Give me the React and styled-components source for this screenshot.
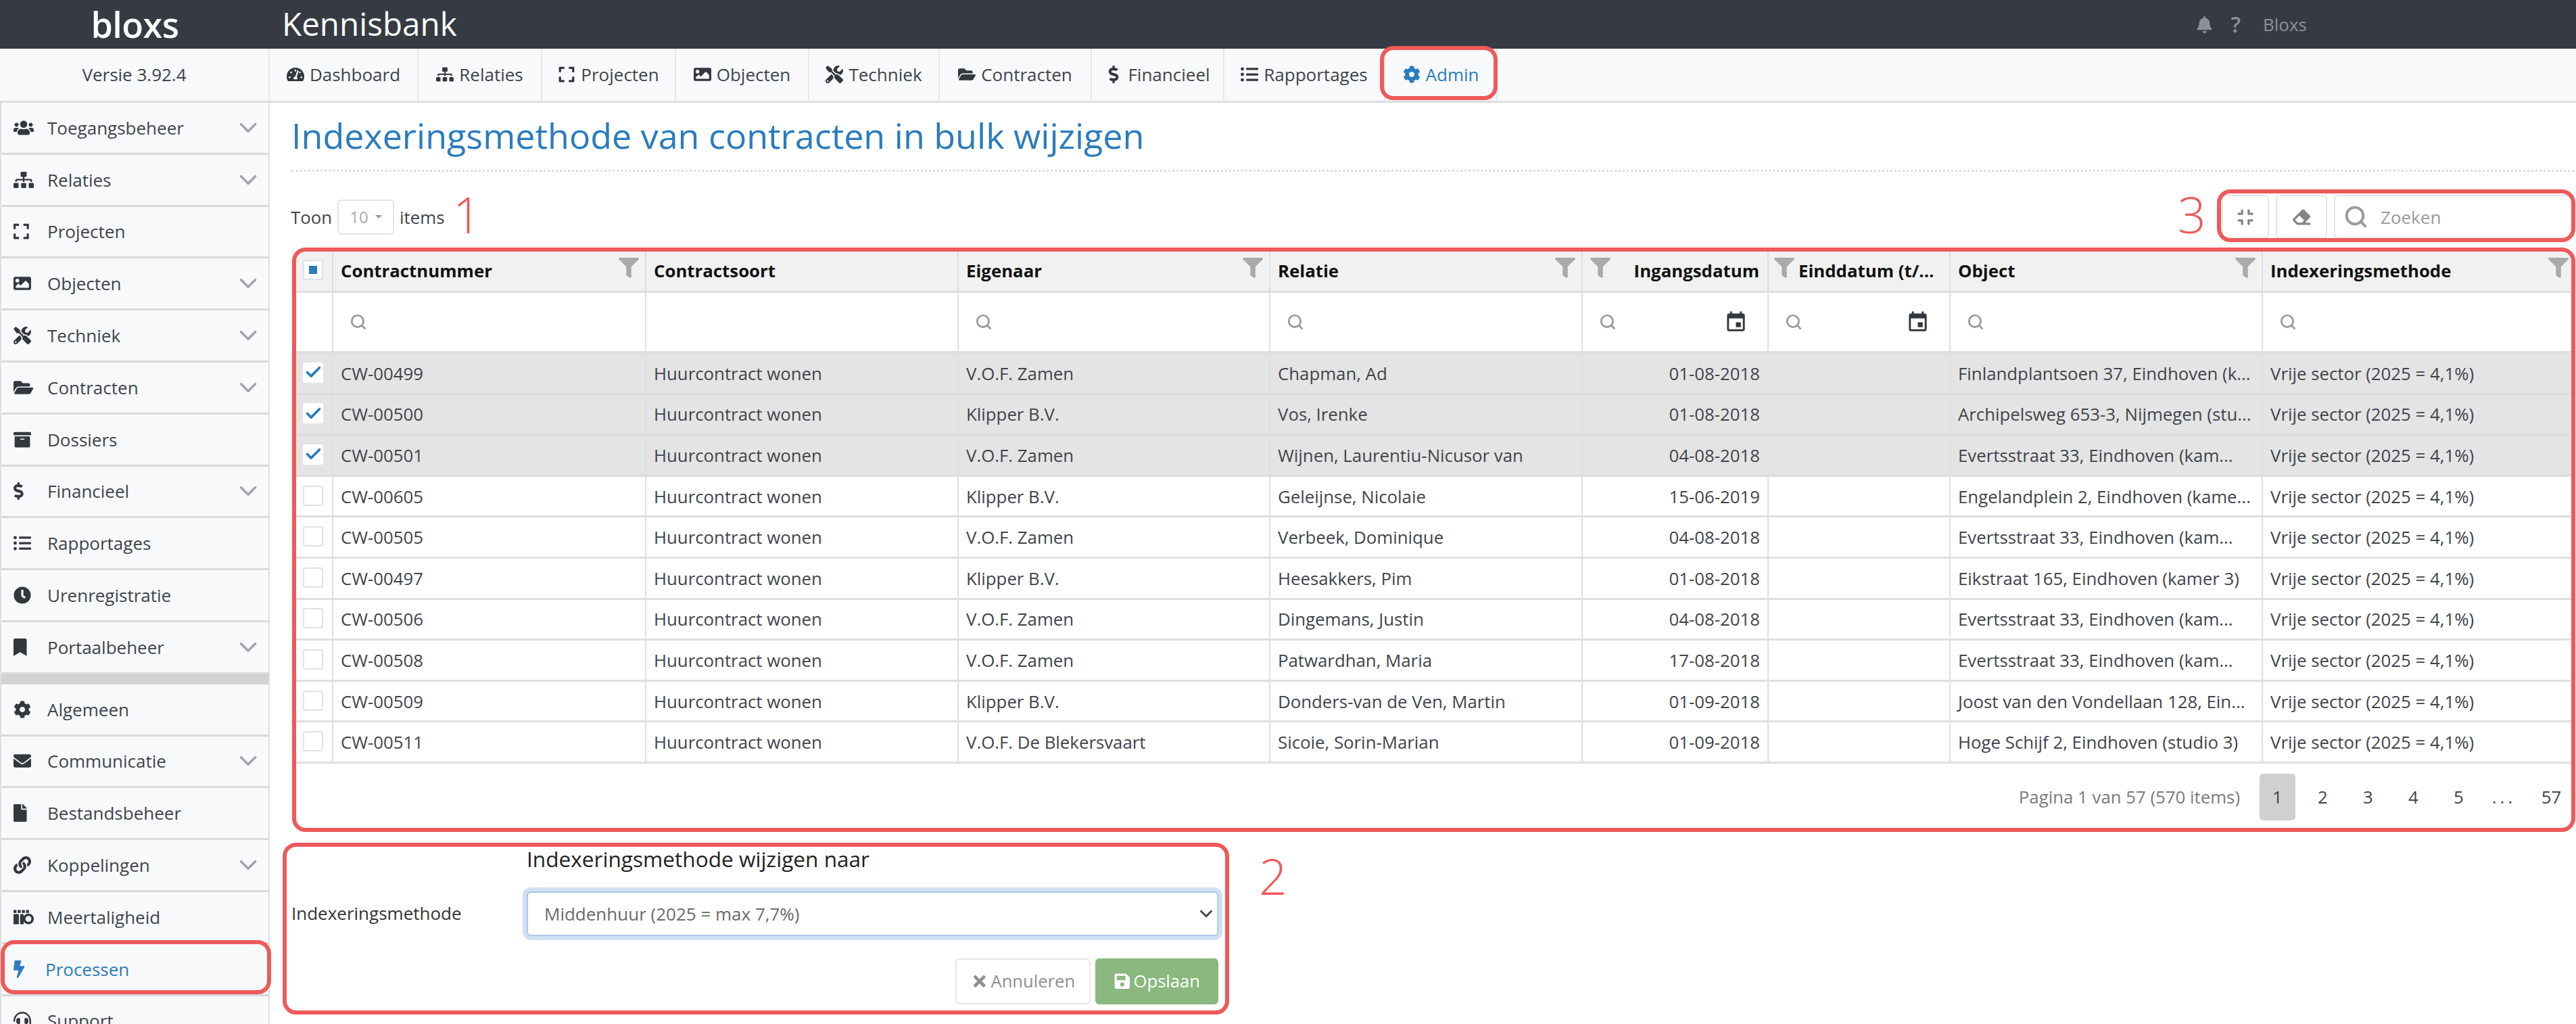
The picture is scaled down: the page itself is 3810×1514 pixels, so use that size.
import React from "react";
import styled, { createGlobalStyle } from "styled-components";
import {
  FaArchive, FaBell, FaBolt, FaBookmark, FaClock, FaCog, FaCompress, FaDollarSign,
  FaEnvelope, FaEraser, FaExpand, FaFile, FaFilter, FaFolderOpen, FaHeadset, FaImage,
  FaLink, FaListUl, FaSave, FaSitemap, FaTachometerAlt, FaTimes, FaTools, FaUsers,
} from "react-icons/fa";
import { MdEvent } from "react-icons/md";
import { Check, ChevronDown, Search } from "lucide-react";

const RED = "#ee5a5a";
const BLUE = "#2a7cbd";
const LINE = "#dedfe0";
const COLS = "62px 463px 462px 461px 462px 275px 269px 462px 461px";

// the icon of "Meertaligheid" has no match in the icon packages
const LanguageIcon = (props) => (
  <svg viewBox="0 0 34 26" fill="currentColor" {...props}>
    <rect x="0" y="1" width="5" height="5" />
    <rect x="7" y="1" width="5" height="5" />
    <rect x="14" y="1" width="5" height="5" />
    <rect x="21" y="1" width="5" height="5" />
    <rect x="0" y="8" width="9" height="17" rx="1" />
    <rect x="11" y="8" width="6" height="17" rx="1" />
    <circle cx="25" cy="16" r="7" fill="none" stroke="currentColor" strokeWidth="4" />
  </svg>
);

const navItems = [
  { label: "Dashboard", icon: FaTachometerAlt, w: 220 },
  { label: "Relaties", icon: FaSitemap, w: 183 },
  { label: "Projecten", icon: FaExpand, w: 198 },
  { label: "Objecten", icon: FaImage, w: 197 },
  { label: "Techniek", icon: FaTools, w: 193 },
  { label: "Contracten", icon: FaFolderOpen, w: 225 },
  { label: "Financieel", icon: FaDollarSign, w: 196 },
  { label: "Rapportages", icon: FaListUl, w: 238 },
  { label: "Admin", icon: FaCog, w: 166, active: true },
];

const sideTop = [
  { label: "Toegangsbeheer", icon: FaUsers, more: true },
  { label: "Relaties", icon: FaSitemap, more: true },
  { label: "Projecten", icon: FaExpand },
  { label: "Objecten", icon: FaImage, more: true },
  { label: "Techniek", icon: FaTools, more: true },
  { label: "Contracten", icon: FaFolderOpen, more: true },
  { label: "Dossiers", icon: FaArchive },
  { label: "Financieel", icon: FaDollarSign, more: true },
  { label: "Rapportages", icon: FaListUl },
  { label: "Urenregistratie", icon: FaClock },
  { label: "Portaalbeheer", icon: FaBookmark, more: true },
];

const sideBottom = [
  { label: "Algemeen", icon: FaCog },
  { label: "Communicatie", icon: FaEnvelope, more: true },
  { label: "Bestandsbeheer", icon: FaFile },
  { label: "Koppelingen", icon: FaLink, more: true },
  { label: "Meertaligheid", icon: LanguageIcon },
  { label: "Processen", icon: FaBolt, active: true },
  { label: "Support", icon: FaHeadset },
];

const columns = [
  { label: "Contractnummer", filter: true, search: true },
  { label: "Contractsoort" },
  { label: "Eigenaar", filter: true, search: true },
  { label: "Relatie", filter: true, search: true },
  { label: "Ingangsdatum", filter: true, search: true, date: true },
  { label: "Einddatum (t/...", filter: true, search: true, date: true, tight: true },
  { label: "Object", filter: true, search: true },
  { label: "Indexeringsmethode", filter: true, search: true },
];

const rows = [
  ["CW-00499", "V.O.F. Zamen", "Chapman, Ad", "01-08-2018", "Finlandplantsoen 37, Eindhoven (k...", true],
  ["CW-00500", "Klipper B.V.", "Vos, Irenke", "01-08-2018", "Archipelsweg 653-3, Nijmegen (stu...", true],
  ["CW-00501", "V.O.F. Zamen", "Wijnen, Laurentiu-Nicusor van", "04-08-2018", "Evertsstraat 33, Eindhoven (kam...", true],
  ["CW-00605", "Klipper B.V.", "Geleijnse, Nicolaie", "15-06-2019", "Engelandplein 2, Eindhoven (kame..."],
  ["CW-00505", "V.O.F. Zamen", "Verbeek, Dominique", "04-08-2018", "Evertsstraat 33, Eindhoven (kam..."],
  ["CW-00497", "Klipper B.V.", "Heesakkers, Pim", "01-08-2018", "Eikstraat 165, Eindhoven (kamer 3)"],
  ["CW-00506", "V.O.F. Zamen", "Dingemans, Justin", "04-08-2018", "Evertsstraat 33, Eindhoven (kam..."],
  ["CW-00508", "V.O.F. Zamen", "Patwardhan, Maria", "17-08-2018", "Evertsstraat 33, Eindhoven (kam..."],
  ["CW-00509", "Klipper B.V.", "Donders-van de Ven, Martin", "01-09-2018", "Joost van den Vondellaan 128, Ein..."],
  ["CW-00511", "V.O.F. De Blekersvaart", "Sicoie, Sorin-Marian", "01-09-2018", "Hoge Schijf 2, Eindhoven (studio 3)"],
];

const GlobalStyle = createGlobalStyle`
  html, body {
    margin: 0;
    background: #fff;
    font-family: "Open Sans", "Liberation Sans", sans-serif;
    font-size: 25.8px;
    color: #3f444b;
  }
  * { box-sizing: border-box; }
`;

const Page = styled.div`
  position: relative;
  width: 3810px;
  height: 1514px;
  overflow: hidden;
`;

const TopBar = styled.header`
  display: flex;
  align-items: center;
  height: 72px;
  background: #363a42;
`;

const Logo = styled.div`
  width: 399px;
  text-align: center;
  font-size: 52px;
  font-weight: 600;
  line-height: 1.2;
  letter-spacing: -0.5px;
  color: #fff;
`;

const AppName = styled.div`
  margin-left: 18px;
  font-size: 47.6px;
  line-height: 1.2;
  color: #fff;
  padding-bottom: 2px;
`;

const UserArea = styled.div`
  display: flex;
  align-items: center;
  margin-left: auto;
  margin-right: 398px;
  color: #8d9196;
  font-size: 26px;
  svg { font-size: 25px; margin-right: 26px; }
`;

const HelpMark = styled.span`
  margin-right: 33px;
  font-size: 32px;
  font-weight: 600;
  line-height: 1;
`;

const SubBar = styled.div`
  display: flex;
  height: 80px;
  background: #f8f9fb;
  border-bottom: 3px solid ${LINE};
`;

const Version = styled.div`
  display: flex;
  align-items: center;
  justify-content: center;
  width: 399px;
  padding-bottom: 2px;
  font-size: 26px;
  border-right: 2px solid #e6e7e9;
`;

const NavList = styled.nav`
  display: flex;
`;

const NavItem = styled.a`
  display: flex;
  align-items: center;
  justify-content: center;
  gap: 8px;
  width: ${(p) => p.$w}px;
  padding-bottom: 2px;
  font-size: 26px;
  white-space: nowrap;
  color: ${(p) => (p.$active ? BLUE : "#3f444b")};
  border-right: 2px solid #e6e7e9;
  svg { width: auto; height: 26px; color: ${(p) => (p.$active ? BLUE : "#33373e")}; }
`;

const Body = styled.div`
  display: flex;
  height: 1362px;
`;

const Sidebar = styled.aside`
  flex: 0 0 399px;
  background: #f8f9fb;
  border-left: 2px solid ${LINE};
  border-right: 2px solid ${LINE};
`;

const SideGap = styled.div`
  height: 15px;
  background: #d2d2d2;
`;

const SideItem = styled.a`
  display: flex;
  align-items: center;
  height: 76.8px;
  padding: 0 9px 0 18px;
  font-size: 26px;
  border-bottom: 3px solid #d8d9db;
  color: ${(p) => (p.$active ? BLUE : "#3f444b")};
  svg.lead { width: 30px; height: 26px; color: ${(p) => (p.$active ? BLUE : "#33373e")}; }
  span { margin-left: ${(p) => (p.$active ? "17px" : "20px")}; flex: 1; }
  svg.more { color: #a5a7aa; }
`;

const Main = styled.main`
  flex: 1;
  min-width: 0;
  padding: 0 2px 0 32px;
`;

const Title = styled.h1`
  height: 102px;
  margin: 0;
  padding-top: 13px;
  font-size: 52px;
  font-weight: 400;
  line-height: 70px;
  color: ${BLUE};
  border-bottom: 3px dotted #ddd;
`;

const Toolbar = styled.div`
  display: flex;
  align-items: center;
  height: 65px;
  margin: 34px 0 0 -1px;
`;

const PageSize = styled.div`
  display: flex;
  align-items: center;
  gap: 8px;
`;

const SizeSelect = styled.div`
  display: flex;
  align-items: center;
  justify-content: center;
  gap: 10px;
  width: 84px;
  height: 52px;
  color: #aaa;
  font-size: 24px;
  border: 2px solid #e4e5e6;
  border-radius: 6px;
  &::after {
    content: "";
    border: 5px solid transparent;
    border-top-color: #999;
    margin-top: 5px;
  }
`;

const Tools = styled.div`
  display: flex;
  gap: 10px;
  height: 100%;
  margin-left: auto;
`;

const ToolButton = styled.button`
  display: flex;
  align-items: center;
  justify-content: center;
  width: ${(p) => p.$w}px;
  padding: 0;
  background: #fff;
  color: #858585;
  font-size: 26px;
  border: 2px solid #e4e5e6;
  border-radius: 6px;
`;

const SearchBox = styled.div`
  display: flex;
  align-items: center;
  gap: 18px;
  width: 356px;
  padding-left: 12px;
  font-size: 26px;
  color: #9a9a9a;
  border: 2px solid #e4e5e6;
  border-radius: 6px;
`;

const Table = styled.section`
  margin-top: 17px;
`;

const Row = styled.div`
  display: grid;
  grid-template-columns: ${COLS};
  height: ${(p) => p.$h}px;
  background: ${(p) => p.$bg || "#fff"};
  border-bottom: ${(p) => p.$line || 3}px solid ${(p) => (p.$bg === "#e4e4e4" ? "#dcdcdc" : LINE)};
`;

const Cell = styled.div`
  display: flex;
  align-items: center;
  min-width: 0;
  padding: 0 11px;
  white-space: nowrap;
  overflow: hidden;
  justify-content: ${(p) => (p.$right ? "flex-end" : "flex-start")};
  border-right: 2px solid ${LINE};
  &:last-child { border-right: 0; }
`;

const HeadCell = styled(Cell)`
  font-weight: 700;
  color: #111;
  padding: 0 9px 0 ${(p) => (p.$tight ? "8px" : "11px")};
`;

const Funnel = styled(FaFilter)`
  flex: none;
  font-size: 30px;
  color: #aaa;
  margin-top: -8px;
  margin-left: ${(p) => (p.$first ? "0" : "auto")};
  margin-right: ${(p) => (p.$first ? (p.$tight ? "6px" : "auto") : "0")};
`;

const HeadDate = styled.span`
  margin-right: 3px;
`;

const FilterCell = styled(Cell)`
  padding: 0 32px 0 24px;
  justify-content: space-between;
  svg.find { color: #999; }
  svg.cal { font-size: 35px; color: #33373e; margin-right: -3px; }
`;

const CheckCell = styled(Cell)`
  padding: 0 0 0 17px;
`;

const Checkbox = styled.div`
  display: flex;
  align-items: center;
  justify-content: center;
  width: 30px;
  height: 30px;
  margin-bottom: 2px;
  background: #fff;
  color: ${BLUE};
  border: ${(p) => (p.$on ? "0" : "2px solid #e1e2e3")};
  border-radius: 3px;
`;

const MixedMark = styled.i`
  display: block;
  width: 12px;
  height: 12px;
  background: ${BLUE};
`;

const Pager = styled.div`
  display: flex;
  align-items: center;
  justify-content: flex-end;
  gap: 14px;
  height: 99px;
  padding-right: 8px;
`;

const PagerInfo = styled.span`
  margin-right: 15px;
  color: #7b7b7b;
`;

const PagerItem = styled.a`
  display: flex;
  align-items: center;
  justify-content: center;
  width: 53px;
  height: 69px;
  border-radius: 5px;
  background: ${(p) => (p.$active ? "#d0d0d0" : "transparent")};
  color: #444;
  margin-right: ${(p) => (p.$dots ? "3px" : "0")};
  letter-spacing: ${(p) => (p.$dots ? "5px" : "0")};
`;

const Form = styled.form`
  display: grid;
  grid-template-columns: 348px 1023px;
  align-items: center;
  width: 1375px;
  margin-top: 20px;
`;

const FormHeading = styled.div`
  grid-column: 2;
  font-size: 31.6px;
  line-height: 44px;
  color: #222;
`;

const FormLabel = styled.label`
  margin-top: 25px;
  font-size: 26px;
  color: #333;
`;

const SelectField = styled.div`
  display: flex;
  align-items: center;
  justify-content: space-between;
  height: 66px;
  margin-top: 26px;
  padding: 0 1px 0 24px;
  font-size: 26px;
  color: #6a6a6a;
  background: #fff;
  border: 2px solid #a9c9ea;
  border-radius: 6px;
  box-shadow: 0 0 0 6px #cfe0f2;
  svg { color: #444; }
`;

const FormActions = styled.div`
  grid-column: 1 / -1;
  display: flex;
  justify-content: flex-end;
  gap: 7px;
  margin-top: 33px;
`;

const Button = styled.button`
  display: flex;
  align-items: center;
  justify-content: center;
  gap: 4px;
  width: ${(p) => p.$w}px;
  height: 68px;
  padding: 0;
  font: inherit;
  font-size: 25.6px;
  color: ${(p) => (p.$primary ? "#fff" : "#8f8f8f")};
  background: ${(p) => (p.$primary ? "#8ab87f" : "#fff")};
  border: 2px solid ${(p) => (p.$primary ? "#8ab87f" : "#e4e5e6")};
  border-radius: 6px;
`;

const Outline = styled.div`
  position: absolute;
  left: ${(p) => p.$x}px;
  top: ${(p) => p.$y}px;
  width: ${(p) => p.$w}px;
  height: ${(p) => p.$h}px;
  border: 6px solid ${RED};
  border-radius: 20px;
  pointer-events: none;
`;

const Digit = styled.div`
  position: absolute;
  left: ${(p) => p.$x}px;
  top: ${(p) => p.$y}px;
  font-size: 73px;
  font-weight: 300;
  line-height: 1;
  color: ${RED};
`;

function SideEntry({ item }) {
  const Icon = item.icon;
  return (
    <SideItem $active={item.active}>
      <Icon className="lead" preserveAspectRatio="xMinYMid meet" />
      <span>{item.label}</span>
      {item.more && <ChevronDown className="more" size={42} strokeWidth={2.2} />}
    </SideItem>
  );
}

function HeaderCell({ col }) {
  if (col.date) {
    return (
      <HeadCell $right={!col.tight} $tight={col.tight}>
        <Funnel $first $tight={col.tight} />
        <HeadDate>{col.label}</HeadDate>
      </HeadCell>
    );
  }
  return (
    <HeadCell>
      {col.label}
      {col.filter && <Funnel />}
    </HeadCell>
  );
}

export default function App() {
  return (
    <Page>
      <GlobalStyle />
      <TopBar>
        <Logo>bloxs</Logo>
        <AppName>Kennisbank</AppName>
        <UserArea>
          <FaBell />
          <HelpMark>?</HelpMark>
          Bloxs
        </UserArea>
      </TopBar>
      <SubBar>
        <Version>Versie 3.92.4</Version>
        <NavList>
          {navItems.map((item) => (
            <NavItem key={item.label} $active={item.active} $w={item.w}>
              <item.icon />
              {item.label}
            </NavItem>
          ))}
        </NavList>
      </SubBar>
      <Body>
        <Sidebar>
          {sideTop.map((item) => <SideEntry key={item.label} item={item} />)}
          <SideGap />
          {sideBottom.map((item) => <SideEntry key={item.label} item={item} />)}
        </Sidebar>
        <Main>
          <Title>Indexeringsmethode van contracten in bulk wijzigen</Title>
          <Toolbar>
            <PageSize>
              Toon
              <SizeSelect>10</SizeSelect>
              items
            </PageSize>
            <Tools>
              <ToolButton $w={70}><FaCompress /></ToolButton>
              <ToolButton $w={76}><FaEraser /></ToolButton>
              <SearchBox>
                <Search size={37} strokeWidth={2.5} />
                Zoeken
              </SearchBox>
            </Tools>
          </Toolbar>
          <Table>
            <Row $h={63} $bg="#f1f1f1">
              <CheckCell>
                <Checkbox><MixedMark /></Checkbox>
              </CheckCell>
              {columns.map((col) => <HeaderCell key={col.label} col={col} />)}
            </Row>
            <Row $h={90} $line={4}>
              <Cell />
              {columns.map((col) => (
                <FilterCell key={col.label}>
                  {col.search && <Search className="find" size={26} strokeWidth={2.5} />}
                  {col.date && <MdEvent className="cal" />}
                </FilterCell>
              ))}
            </Row>
            {rows.map(([nr, owner, relation, start, object, selected]) => (
              <Row key={nr} $h={60.6} $bg={selected ? "#e4e4e4" : undefined}>
                <CheckCell>
                  <Checkbox $on={selected}>{selected && <Check size={27} strokeWidth={3.2} />}</Checkbox>
                </CheckCell>
                <Cell>{nr}</Cell>
                <Cell>Huurcontract wonen</Cell>
                <Cell>{owner}</Cell>
                <Cell>{relation}</Cell>
                <Cell $right>{start}</Cell>
                <Cell />
                <Cell>{object}</Cell>
                <Cell>Vrije sector (2025 = 4,1%)</Cell>
              </Row>
            ))}
            <Pager>
              <PagerInfo>Pagina 1 van 57 (570 items)</PagerInfo>
              <PagerItem $active>1</PagerItem>
              <PagerItem>2</PagerItem>
              <PagerItem>3</PagerItem>
              <PagerItem>4</PagerItem>
              <PagerItem>5</PagerItem>
              <PagerItem $dots>...</PagerItem>
              <PagerItem>57</PagerItem>
            </Pager>
          </Table>
          <Form>
            <FormHeading>Indexeringsmethode wijzigen naar</FormHeading>
            <FormLabel>Indexeringsmethode</FormLabel>
            <SelectField>
              Middenhuur (2025 = max 7,7%)
              <ChevronDown size={30} strokeWidth={2.4} />
            </SelectField>
            <FormActions>
              <Button type="button" $w={200}><FaTimes />Annuleren</Button>
              <Button type="button" $w={182} $primary><FaSave />Opslaan</Button>
            </FormActions>
          </Form>
        </Main>
      </Body>
      <Outline $x={2041} $y={68} $w={174} $h={80} />
      <Outline $x={1} $y={1390} $w={400} $h={80} />
      <Outline $x={432} $y={366} $w={3377} $h={864} />
      <Outline $x={418} $y={1246} $w={1400} $h={254} />
      <Outline $x={3279} $y={280} $w={530} $h={78} />
      <Digit $x={670} $y={280}>1</Digit>
      <Digit $x={1862} $y={1258}>2</Digit>
      <Digit $x={3221} $y={280}>3</Digit>
    </Page>
  );
}
